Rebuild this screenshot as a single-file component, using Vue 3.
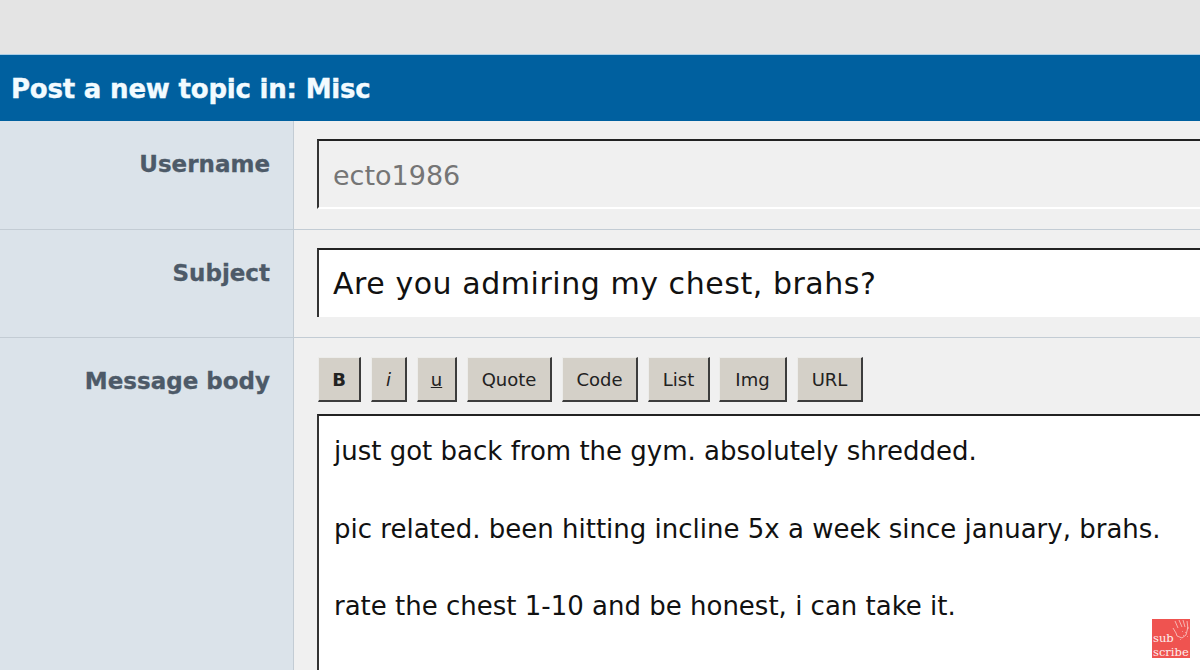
<script setup>
const buttons = [
  { label: 'B', cls: 'bold' },
  { label: 'i', cls: 'ital' },
  { label: 'u', cls: 'under' },
  { label: 'Quote', cls: 'quote' },
  { label: 'Code', cls: 'code' },
  { label: 'List', cls: 'list' },
  { label: 'Img', cls: 'img' },
  { label: 'URL', cls: 'url' }
]

const lines = [
  'just got back from the gym. absolutely shredded.',
  'pic related. been hitting incline 5x a week since january, brahs.',
  'rate the chest 1-10 and be honest, i can take it.'
]
</script>

<template>
  <div class="page">
    <div class="top-band"></div>
    <div class="title-bar">Post a new topic in: Misc</div>

    <div class="row row-user">
      <div class="label-cell">Username</div>
      <div class="field-cell">
        <div class="input input-disabled">ecto1986</div>
      </div>
    </div>

    <div class="row row-subject">
      <div class="label-cell">Subject</div>
      <div class="field-cell">
        <div class="input input-subject">Are you admiring my chest, brahs?</div>
      </div>
    </div>

    <div class="row row-body">
      <div class="label-cell">Message body</div>
      <div class="field-cell field-body">
        <div class="toolbar">
          <button v-for="b in buttons" :key="b.label" class="tool" :class="b.cls">{{ b.label }}</button>
        </div>
        <div class="textarea">
          <p v-for="line in lines" :key="line">{{ line }}</p>
        </div>
      </div>
    </div>

    <div class="sub-badge">
      <svg class="hand" viewBox="0 0 18 24" width="18" height="24" fill="none" stroke="#f8cfcc" stroke-width="0.8">
        <path d="M3 2l3 7M7 1l3 7M11 1l2 7M15 2l1 8M1 9l3 5 1 3 5 2 4-3 2-8" />
        <path d="M10 12l1 1M13 13l1 1M11 16l1 1M15 17l1 1M8 20l1 1" stroke-dasharray="1 1" />
      </svg>
      <span class="sub-text">sub<br />scribe</span>
    </div>
  </div>
</template>

<style scoped>
.page {
  position: relative;
  width: 1200px;
  height: 670px;
  overflow: hidden;
  background: #f0f0f0;
  font-family: "DejaVu Sans", Verdana, sans-serif;
}

.top-band {
  height: 54px;
  background: #e4e4e4;
  border-bottom: 1px solid #a9cde6;
}

.title-bar {
  height: 66px;
  padding-left: 11px;
  line-height: 68px;
  background: #00609f;
  color: #f2fbff;
  font-size: 26px;
  font-weight: 700;
  letter-spacing: -0.2px;
  -webkit-text-stroke: 0.4px #f2fbff;
}

.row {
  display: flex;
  border-bottom: 1px solid #c3ccd4;
}

.row-user {
  height: 108px;
}

.row-subject {
  height: 107px;
}

.row-body {
  height: 332px;
  border-bottom: none;
}

.label-cell {
  box-sizing: border-box;
  width: 294px;
  flex-shrink: 0;
  padding: 28px 23px 0 0;
  text-align: right;
  background: #dbe3ea;
  border-right: 1px solid #c3ccd4;
  color: #4d5a68;
  font-size: 23px;
  font-weight: 700;
  line-height: 30px;
  -webkit-text-stroke: 0.3px #4d5a68;
}

.field-cell {
  flex: 1;
  padding: 18px 0 0 23px;
  min-width: 0;
}

.field-body {
  padding-top: 19px;
}

.input {
  box-sizing: border-box;
  height: 70px;
  padding-left: 14px;
  line-height: 70px;
  font-size: 27px;
  color: #111;
  background: #fff;
  border-top: 2px solid #222;
  border-left: 2px solid #333;
}

.input-subject {
  height: 69px;
  line-height: 68px;
  font-size: 30px;
  letter-spacing: 0.55px;
}

.input-disabled {
  color: #757575;
  background: #f0f0f0;
  border-bottom: 2px solid #fff;
}

.toolbar {
  display: flex;
  gap: 10px;
  padding-left: 1px;
}

.tool {
  box-sizing: border-box;
  height: 45px;
  padding: 0;
  font-family: inherit;
  font-size: 18px;
  color: #222;
  background: #d4d0c8;
  border: 1px solid #ececea;
  border-right: 2px solid #3c3c3c;
  border-bottom: 2px solid #3c3c3c;
}

.bold {
  width: 43px;
  font-weight: 700;
}

.ital {
  width: 36px;
  font-style: italic;
}

.under {
  width: 40px;
  text-decoration: underline;
}

.quote {
  width: 85px;
}

.code {
  width: 76px;
}

.list {
  width: 62px;
}

.img {
  width: 68px;
  margin-left: -1px;
}

.url {
  width: 66px;
}

.textarea {
  box-sizing: border-box;
  margin-top: 12px;
  height: 300px;
  padding: 20px 0 0 15px;
  background: #fff;
  border-top: 2px solid #222;
  border-left: 2px solid #333;
  color: #111;
  font-size: 26px;
}

.textarea p {
  margin: 0 0 47.5px;
  line-height: 30px;
  white-space: nowrap;
}

.sub-badge {
  position: absolute;
  left: 1152px;
  top: 619px;
  box-sizing: border-box;
  width: 38px;
  height: 39px;
  padding: 12px 0 0 1px;
  background: #ef5350;
  overflow: hidden;
}

.hand {
  position: absolute;
  top: 0;
  right: 0;
}

.sub-text {
  position: relative;
  display: block;
  color: #fdeeee;
  font-family: "DejaVu Serif", serif;
  font-size: 11.5px;
  line-height: 14px;
}
</style>
